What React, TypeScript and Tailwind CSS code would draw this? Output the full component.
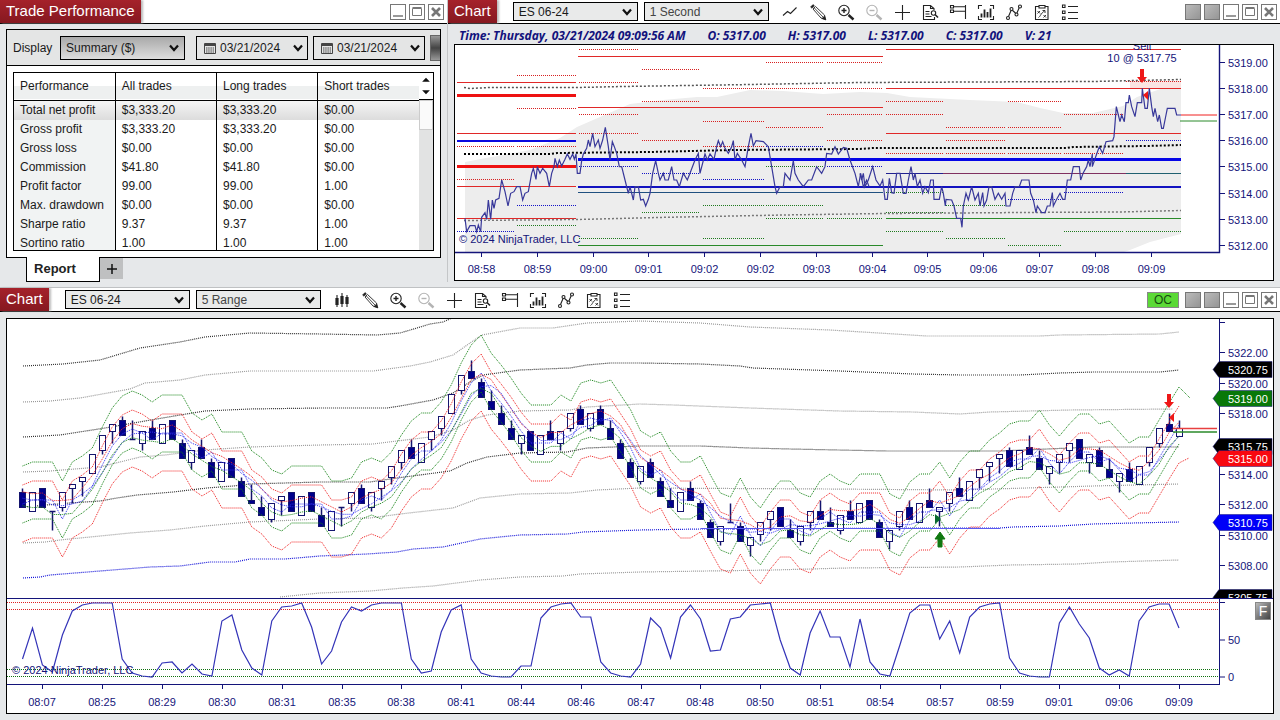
import React, { useId, useState } from 'react'

const SANS = "font-['Liberation_Sans',Arial,sans-serif]"

/* ---------- Toolbar icons ---------- */

type IconProps = { children: React.ReactNode; className?: string }

const Glyph: React.FC<IconProps> = ({ children, className = 'text-[#222]' }) => (
  <svg viewBox="0 0 18 18" className={`h-[18px] w-[18px] ${className}`} fill="none" stroke="currentColor" strokeWidth="1.1">
    {children}
  </svg>
)

const LineStyleIcon = () => (
  <Glyph>
    <path d="M2 12.500 L6.500 8.500 L9.500 10.500 L15.500 4.500" />
  </Glyph>
)

const CandleStyleIcon = () => (
  <Glyph>
    <path d="M4 4v12M9 2v14M14 4v12" />
    <path d="M4 7v7M9 5v8M14 6v7" strokeWidth="3.2" />
  </Glyph>
)

const PencilIcon = () => (
  <Glyph>
    <path d="M4 6 L6.500 3.500 L15.500 12 L16.500 16.500 L12 15 Z" strokeWidth=".9" />
    <path d="M5.200 4.800 L14 14" strokeWidth=".8" />
    <path d="M1.500 4 L4 1.500 L5.500 2.800 L3 5.300Z M15.500 13l1.500 4-4.200-1.400z" fill="currentColor" strokeWidth=".5" />
  </Glyph>
)

const ZoomInIcon = () => (
  <Glyph>
    <circle cx="7" cy="7.500" r="5.200" />
    <path d="M7 5v5M4.500 7.500h5" strokeWidth="1.400" />
    <path d="M11.500 12 L16.500 16.500" strokeWidth="2.400" />
  </Glyph>
)

const ZoomOutIcon = () => (
  <Glyph className="text-[#b4b4b4]">
    <circle cx="7" cy="7.500" r="5.200" />
    <path d="M4.500 7.500h5" strokeWidth="1.400" />
    <path d="M11.500 12 L16.500 16.500" strokeWidth="2.400" />
  </Glyph>
)

const CrosshairIcon = () => (
  <Glyph>
    <path d="M9.500 2v15M2 9.500h15" />
  </Glyph>
)

const DataBoxIcon = () => (
  <Glyph>
    <path d="M13 7 V5.500 L9.500 2.500 H2.500 V16.500 H13.500 V14 M9.500 2.500 V5.500 H13" />
    <path d="M4.500 8.500h4M4.500 11h4M4.500 13.500h6" />
    <circle cx="12.500" cy="10" r="2.200" />
    <path d="M14 11.500l3 3" strokeWidth="1.600" />
  </Glyph>
)

const TraderIcon = () => (
  <Glyph>
    <path d="M1.500 2.500h3v2.500h-3zM1.500 7h3v2.500h-3z" />
    <path d="M4.500 3.800h12M16.500 2v14M4.500 8.300h12" />
  </Glyph>
)

const IndicatorIcon = () => (
  <Glyph>
    <path d="M5 2.500H1.500V6M13 2.500h3.500V6M5 16.500H1.500V13M13 16.500h3.500V13" />
    <path d="M4.500 10.500v4M7.500 6.500v8M10.500 9v5.500M13.500 5.500v9" strokeWidth="1.800" />
  </Glyph>
)

const DrawingIcon = () => (
  <Glyph>
    <path d="M3.500 13.500 L6.500 6.500 L11.500 11 L14.500 4" />
    <circle cx="3" cy="15" r="1.500" fill="#fff" />
    <circle cx="6.500" cy="6" r="1.500" fill="#fff" />
    <circle cx="11.500" cy="11.500" r="1.500" fill="#fff" />
    <circle cx="15" cy="3.500" r="1.500" fill="#fff" />
  </Glyph>
)

const StrategyIcon = () => (
  <Glyph>
    <path d="M6 3.500H2.500v13h12.500v-13H12" />
    <path d="M6 2.500h6v2.500H6z" />
    <path d="M4.500 8l2.500 2.500M7 8l-2.500 2.500M10.500 12l2.500 2.500M13 12l-2.500 2.500M5.500 14.500c2-1 2-4 6-6.500M9.500 7.500h2.500V10" strokeWidth=".9" />
  </Glyph>
)

const PropertiesIcon = () => (
  <Glyph>
    <path d="M1.500 2h2.500v2.500h-2.500zM1.500 8h2.500v2.500h-2.500zM1.500 14h2.500v2.500h-2.500zM7 3.500h10M7 9.500h10M7 15.500h10" />
  </Glyph>
)

const tools = [
  { label: 'Zoom in', icon: ZoomInIcon },
  { label: 'Zoom out', icon: ZoomOutIcon },
  { label: 'Crosshair', icon: CrosshairIcon },
  { label: 'Data box', icon: DataBoxIcon },
  { label: 'Chart trader', icon: TraderIcon },
  { label: 'Indicators', icon: IndicatorIcon },
  { label: 'Drawing objects', icon: DrawingIcon },
  { label: 'Strategies', icon: StrategyIcon },
  { label: 'Properties', icon: PropertiesIcon },
]

/* ---------- Shared window chrome ---------- */

const Title: React.FC<{ children: string }> = ({ children }) => (
  <h2 className="flex h-full items-center bg-linear-to-b from-[#a5222b] to-[#861820] px-1.5 text-[15px] text-white shadow-[2px_0_2px_#bbb]">
    {children}
  </h2>
)

const Chevron: React.FC<{ className?: string }> = ({ className = '' }) => (
  <svg viewBox="0 0 10 8" className={`pointer-events-none h-2 w-2.5 ${className}`} fill="none" stroke="#111" strokeWidth="2.200">
    <path d="M1 1.500 L5 6 L9 1.500" />
  </svg>
)

type DropDownProps = { label: string; options: string[]; className?: string; id?: string }

const DropDown: React.FC<DropDownProps> = ({ label, options, className = '', id }) => (
  <div className="relative flex shrink-0 items-center">
    <select
      id={id}
      aria-label={label}
      className={`w-[125px] appearance-none border border-black pl-[5px] text-xs outline-none ${className}`}
    >
      {options.map((o) => (
        <option key={o}>{o}</option>
      ))}
    </select>
    <Chevron className="absolute right-1.5" />
  </div>
)

const WindowButtons: React.FC<{ linked?: boolean }> = ({ linked }) => {
  const box = 'flex h-4 w-4 items-center justify-center border border-[#777] text-[#777]'
  return (
    <div className="ml-auto flex items-center gap-[3px] pr-[3px]">
      {linked && (
        <>
          <button aria-label="Instrument link" className={`${box} bg-linear-to-br from-[#bbb] to-[#959595]`} />
          <button aria-label="Interval link" className={`${box} bg-linear-to-br from-[#bbb] to-[#959595]`} />
        </>
      )}
      <button aria-label="Minimize" className={`${box} bg-white`}>
        <svg viewBox="0 0 14 14" className="h-3.5 w-3.5"><path d="M2 11h10" stroke="currentColor" strokeWidth="1.500" /></svg>
      </button>
      <button aria-label="Maximize" className={`${box} bg-white`}>
        <svg viewBox="0 0 14 14" className="h-3.5 w-3.5" fill="none" stroke="currentColor"><path d="M2.500 3.500h9v7h-9zM2.500 2.500h9" /></svg>
      </button>
      <button aria-label="Close" className={`${box} bg-white`}>
        <svg viewBox="0 0 14 14" className="h-3.5 w-3.5"><path d="M3 3l8 8M11 3l-8 8" stroke="currentColor" strokeWidth="2.600" /></svg>
      </button>
    </div>
  )
}

type ChartHeaderProps = { interval: string; style: React.FC; oc?: boolean }

const ChartHeader: React.FC<ChartHeaderProps> = ({ interval, style: StyleIcon, oc }) => (
  <header className="flex h-6 items-center border-b border-black bg-white">
    <Title>Chart</Title>
    <div className="ml-4 flex gap-[6px]">
      <DropDown label="Instrument" options={['ES 06-24']} className="h-[19px] bg-[#e9eaea]" />
      <DropDown label="Interval" options={[interval]} className="h-[19px] bg-[#e9eaea] text-[#444]" />
    </div>
    <div className="ml-3 flex gap-2.5">
      <button aria-label="Chart style"><StyleIcon /></button>
      <button aria-label="Draw"><PencilIcon /></button>
      {tools.map(({ label, icon: Icon }) => (
        <button key={label} aria-label={label}><Icon /></button>
      ))}
    </div>
    {oc && (
      <button className="-mr-0.5 ml-auto h-4 w-8 border border-[#888] bg-[#5bd936] text-xs leading-3 text-[#154a10]">OC</button>
    )}
    <div className={oc ? 'ml-2' : 'ml-auto'}><WindowButtons linked /></div>
  </header>
)

/* ---------- Trade performance ---------- */

const columns = ['Performance', 'All trades', 'Long trades', 'Short trades']

const rows = [
  ['Total net profit', '$3,333.20', '$3,333.20', '$0.00'],
  ['Gross profit', '$3,333.20', '$3,333.20', '$0.00'],
  ['Gross loss', '$0.00', '$0.00', '$0.00'],
  ['Commission', '$41.80', '$41.80', '$0.00'],
  ['Profit factor', '99.00', '99.00', '1.00'],
  ['Max. drawdown', '$0.00', '$0.00', '$0.00'],
  ['Sharpe ratio', '9.37', '9.37', '1.00'],
  ['Sortino ratio', '1.00', '1.00', '1.00'],
]

const DateField: React.FC<{ label: string }> = ({ label }) => {
  const [value, setValue] = useState('03/21/2024')
  return (
    <div className="flex h-6 w-[112px] items-center border border-black pl-[7px] pr-1">
      <svg viewBox="0 0 12 12" className="h-3 w-3 shrink-0" fill="none" stroke="#444">
        <path d="M.5 1.500h11v10H.5z M.5 3.500h11" />
        <path d="M1 2.500h10" strokeWidth="2" />
        <path d="M2 6h8M2 8h8M2 10h8" strokeDasharray="1.500 .7" />
      </svg>
      <input
        aria-label={label}
        value={value}
        onChange={(e) => setValue(e.target.value)}
        className="ml-1 w-0 flex-1 bg-transparent text-xs outline-none"
      />
      <Chevron className="shrink-0" />
    </div>
  )
}

const TradePerformance: React.FC = () => {
  const displayId = useId()
  return (
    <section className="flex w-[448px] shrink-0 flex-col border-r border-[#c4c6c8]">
      <header className="flex h-6 items-center border-b border-black bg-white">
        <Title>Trade Performance</Title>
        <WindowButtons />
      </header>

      <div className="mx-1.5 mt-[5px] border border-black bg-white">
        <div className="flex h-9 items-center overflow-hidden border-b border-black bg-[#e4e5e5] pl-1.5 text-xs">
          <label htmlFor={displayId} className="w-[47px] shrink-0">Display</label>
          <DropDown id={displayId} label="Display" options={['Summary ($)']} className="h-6 bg-linear-to-b from-[#a9a9a9] to-[#dedede]" />
          <div className="ml-[11px] flex shrink-0 gap-[5px]">
            <DateField label="Start date" />
            <DateField label="End date" />
          </div>
          <button aria-label="Generate" className="ml-[5px] h-[26px] w-6 shrink-0 border border-[#666] bg-linear-to-b from-[#999] via-[#444] to-[#999]" />
        </div>

        <div className="m-1.5 flex max-h-[179px] overflow-hidden border border-black">
          <table className="h-fit w-0 flex-1 table-fixed border-collapse text-left text-xs">
            <thead>
              <tr className="h-[27px] border-b border-black bg-linear-to-b from-white from-50% to-[#eef0f0] to-50%">
                {columns.map((c) => (
                  <th key={c} className="w-1/4 border-r border-black pl-[6px] font-normal last:border-r-0">{c}</th>
                ))}
              </tr>
            </thead>
            <tbody>
              {rows.map((row, i) => (
                <tr key={row[0]} className={`h-[19px] ${i === 0 ? 'bg-linear-to-b from-[#f6f6f6] to-[#dcdcdc]' : ''}`}>
                  {row.map((cell, j) => (
                    <td
                      key={j}
                      className={`whitespace-nowrap border-r border-black pl-[6px] leading-[19px] last:border-r-0 ${j === 0 && i > 0 ? 'bg-[#f1f3f3]' : ''}`}
                    >
                      {cell}
                    </td>
                  ))}
                </tr>
              ))}
            </tbody>
          </table>
          <div className="flex w-3.5 flex-col bg-[#e2e3e3]">
            <svg viewBox="0 0 14 27" className="h-[27px] w-3.5 border-b border-black bg-white">
              <path d="M3 9 L7 5 L11 9Z M3 18 L7 22 L11 18Z" fill="#111" />
            </svg>
            <button aria-label="Scroll" className="h-[30px] border border-[#ccc] bg-[#fafafa]" />
          </div>
        </div>
      </div>

      <div className="-mt-px flex pl-[26px]">
        <button className="h-[25px] w-[74px] border border-t-0 border-black bg-white pr-4 text-[13px] font-bold text-[#222]">Report</button>
        <button aria-label="Add tab" className="mt-px flex h-[21px] w-[23px] items-center justify-center bg-[#bfc0c1]">
          <svg viewBox="0 0 12 12" className="h-3 w-3"><path d="M6 1v10M1 6h10" stroke="#111" strokeWidth="1.500" /></svg>
        </button>
      </div>
    </section>
  )
}

/* ---------- One second chart ---------- */

const RED = '#e02828'
const BLUE = '#1414c8'
const GREEN = '#2a8a2a'
const NAVY = '#14147a'

// [x1, x2, y, colour, width]
const levels: [number, number, number, string, number][] = [
  [457, 576, 82, RED, 1], [457, 576, 95, '#ee1111', 3], [457, 576, 133, RED, 1], [457, 576, 141, '#0a0ae0', 2],
  [457, 576, 166, '#ee1111', 3], [457, 576, 186, RED, 1], [457, 576, 218, RED, 1],
  [578, 883, 56, RED, 1], [578, 883, 107, RED, 1], [578, 1181, 159, '#0505e6', 3], [578, 1181, 187, '#1212c0', 2],
  [578, 883, 192, '#205080', 1], [578, 883, 245, GREEN, 1],
  [886, 1181, 49, RED, 1], [886, 1181, 88, RED, 1], [886, 1181, 133, RED, 1],
  [886, 943, 173, '#202090', 1], [943, 1126, 173, '#803060', 1], [1126, 1181, 173, '#206070', 1], [886, 1181, 218, GREEN, 1],
]

// every session slice carries its own set of dotted levels
const dotted: { x: [number, number]; red: number[]; blue: number[]; green: number[] }[] = [
  { x: [457, 514], red: [146, 179], blue: [231], green: [] },
  { x: [517, 576], red: [75, 108, 146], blue: [205], green: [225] },
  { x: [579, 638], red: [49, 82, 114, 133], blue: [166], green: [238] },
  { x: [642, 699], red: [69, 101, 140], blue: [173], green: [212] },
  { x: [703, 764], red: [88, 121, 146], blue: [179], green: [205, 238] },
  { x: [766, 824], red: [62, 88, 127], blue: [146], green: [166, 205, 218] },
  { x: [827, 883], red: [62, 88, 114, 140], blue: [166], green: [218] },
  { x: [886, 943], red: [101, 114, 153], blue: [], green: [192, 212, 231] },
  { x: [946, 1005], red: [127, 140, 153], blue: [], green: [205, 238] },
  { x: [1008, 1061], red: [101, 127, 153], blue: [199], green: [245] },
  { x: [1064, 1124], red: [114, 153], blue: [192], green: [231] },
  { x: [1126, 1181], red: [81], blue: [140], green: [231] },
]

// tick path, in thirds of a pixel from each slice's origin
const priceSlices = [
  {
    at: 'translate(450 130) scale(.33333)',
    d: '45,265 50,305 60,287 75,287 80,305 85,285 92,305 95,262 105,248 110,268 115,210 122,268 127,210 132,235 137,210 147,205 155,150 165,185 174,228 182,190 192,185 200,170 210,170 218,210 225,190 235,185 245,130 250,115 258,148 262,110 270,130 278,115 290,130 298,170 305,130 312,110 315,85 322,110 328,90 335,108 345,88 352,72 360,88 368,72 373,88 378,72 382,130 390,130 395,92 400,72 410,55 415,30 420,50 428,10 435,50 445,30 450,55 458,30 466,-8 475,50 480,90 487,35 493,50 500,70 508,110 515,110 525,150 535,190 540,170 550,210 555,170 565,170 572,210 580,208 587,228 595,208 600,190 608,130 617,92 625,130 630,150 640,130 645,150 655,150 665,110 672,150 680,150 688,170 700,130 712,150 720,130 735,90 745,70 750,130 765,72 772,90 780,72 792,88 800,50 805,32 812,50 818,35 825,55 835,70 845,50 850,32 855,90 862,70 875,90 885,110 895,50 903,10 910,48 918,32 940,35 955,50 965,110 975,170 980,190 990,170 1000,170 1005,130 1020,150 1030,92 1035,130 1045,150 1060,170 1075,150 1085,150 1100,110 1115,130 1125,110 1130,70 1145,72 1155,50 1165,72 1180,52 1190,55 1200,90 1215,130 1225,170 1232,130 1240,170 1250,150 1257,170',
  },
  {
    at: 'translate(860 130) scale(.33333)',
    d: '0,130 5,150 10,130 15,170 25,150 38,110 48,150 60,168 68,150 75,208 82,208 88,145 95,188 102,190 110,130 120,130 130,190 138,190 145,150 153,110 160,150 165,130 172,170 180,150 188,190 195,170 205,188 212,150 220,150 222,208 238,208 245,170 250,190 256,228 258,208 275,210 282,228 290,265 302,265 306,292 310,228 318,190 325,210 335,170 345,210 355,190 360,228 368,188 372,228 380,210 387,170 395,170 405,208 415,190 425,208 435,190 438,228 450,228 458,190 465,170 478,170 485,150 507,150 512,190 520,210 528,248 532,228 545,248 555,248 562,228 570,228 577,188 580,228 590,208 600,190 608,208 615,208 622,150 632,150 640,110 658,110 662,150 670,128 680,110 685,90 690,110 697,72 697,110 710,72 718,50 728,70 738,35 758,32 762,20 769,-70 775,-45 780,-25 785,-45 793,-25 798,-82 805,-82 808,-105 815,-70 825,-40 832,-82 845,-82 847,-125 855,-65 862,-65 868,-125 875,-70 880,-40 885,-65 893,-25 898,-45 905,-5 910,-5 918,-45 922,-65 945,-65 950,-45 963,-45',
  },
]

const quotes = ['O: 5317.00', 'H: 5317.00', 'L: 5317.00', 'C: 5317.00', 'V: 21']
const secondTimes = ['08:58', '08:59', '09:00', '09:01', '09:02', '09:02', '09:03', '09:04', '09:05', '09:06', '09:07', '09:08', '09:09']

const DownArrow: React.FC<{ x: number; y: number }> = ({ x, y }) => (
  <path d={`M${x - 2} ${y}h4v8h3l-5 6-5-6h3z`} fill="#ee1818" />
)

const SecondChart: React.FC = () => (
  <section className="flex min-w-0 flex-1 flex-col">
    <ChartHeader interval="1 Second" style={LineStyleIcon} />
    <p className="flex h-5 items-center gap-[22px] whitespace-nowrap pl-[11px] pt-1 font-['Open_Sans',sans-serif] text-xs font-bold italic text-[#12127c]">
      <span>Time: Thursday, 03/21/2024 09:09:56 AM</span>
      {quotes.map((q) => (
        <span key={q}>{q}</span>
      ))}
    </p>
    <div className="mx-1.5 border border-black bg-white">
      <svg viewBox="455 45 818 235" className="h-auto w-full" fontSize="11" fill={NAVY}>
        <path
          fill="#ededed"
          d="M465 252V162L486 158L530 150L560 138L577 127L600 117L630 104L663 100L697 97L717 97L750 90L783 91L823 94L860 92L887 93L910 97L970 100L1017 102L1040 108L1063 113L1093 113L1123 106L1137 97L1181 82V234L1150 242L1130 250L1124 252Z"
        />
        <path d="M1130 81H1181V88H1130Z" fill="#fbe4e2" />
        <g fill="none" shapeRendering="crispEdges">
          {dotted.flatMap(({ x, red, blue, green }) =>
            [
              ...red.map((y) => [y, '#d82020'] as const),
              ...blue.map((y) => [y, BLUE] as const),
              ...green.map((y) => [y, '#1e7a1e'] as const),
            ].map(([y, c]) => (
              <path key={`${x[0]}-${y}`} d={`M${x[0]} ${y + 0.5}H${x[1]}`} stroke={c} strokeDasharray="1 1" />
            )),
          )}
          {levels.map(([x1, x2, y, c, w]) => (
            <path key={`${x1}-${y}`} d={`M${x1} ${w === 2 ? y : y + 0.5}H${x2}`} stroke={c} strokeWidth={w} />
          ))}
        </g>
        <g fill="none" strokeDasharray="2 2">
          <path d="M464 87.500L470 88.500L490 87.500H577L623 86.500L750 84.500L860 82.500L1093 81.500L1181 79.500" stroke="#555" strokeWidth="1.500" />
          <path d="M464 154H550L557 153L650 152L733 150L860 149L873 148H1067L1073 147L1147 146L1181 145" stroke="#000" strokeWidth="2" />
          <path d="M464 220.500L577 219.500L657 217.500L783 215L885 213.500L1023 212.500L1120 212L1181 210.500" stroke="#777" strokeWidth="1.500" />
        </g>
        {priceSlices.map((s) => (
          <polyline key={s.at} points={s.d} transform={s.at} fill="none" stroke="#38389a" strokeWidth="3.600" />
        ))}
        <path d="M1181 115H1217" stroke="#f02020" />
        <path d="M1180 121H1217" stroke={GREEN} />
        <DownArrow x={1142} y={69} />
        <path d="M1148 91V100L1143 95Z" fill="#ee1818" />
        <text x="1142" y="50" textAnchor="middle">Sell</text>
        <text x="1142" y="62" textAnchor="middle">10 @ 5317.75</text>
        <text x="459" y="243">© 2024 NinjaTrader, LLC</text>

        <path d="M455 252.500H1219.500V45" fill="none" stroke={NAVY} strokeWidth="1.400" />
        {[5319, 5318, 5317, 5316, 5315, 5314, 5313, 5312].map((p, i) => {
          const y = 62.5 + Math.round(i * 26.1)
          return (
            <g key={p}>
              <path d={`M1220 ${y}H1225`} stroke={NAVY} />
              <text x="1228" y={y + 4}>{p}.00</text>
            </g>
          )
        })}
        {secondTimes.map((t, i) => {
          const x = 481.5 + Math.round(i * 55.8)
          return (
            <g key={i}>
              <path d={`M${x} 253V257`} stroke={NAVY} />
              <text x={x} y="273" textAnchor="middle">{t}</text>
            </g>
          )
        })}
      </svg>
    </div>
  </section>
)

/* ---------- Five range chart ---------- */

// 'u' bars close on the high, 'd' bars close on the low; low and open in ticks above 5308
const bars =
  'd15,19 u14,14 d15,20 u9,14 u14,15 u16,20 u18,22 u24,24 u29,30 u32,35 d34,38 d33,33 u30,32 d33,36 u32,32 d33,38 d28,32 u25,27 d28,31 d23,27 u22,22 d23,28 d18,22 d16,17 d13,15 u11,12 u13,17 d14,19 u13,13 d14,19 d10,13 ' +
  'u9,9 u10,15 u14,16 d16,20 u14,15 u17,20 u21,23 u25,27 d28,31 u27,27 u30,33 u34,36 u40,40 u45,46 d49,51 d44,48 d41,43 d37,40 d33,36 u29,32 d30,35 u29,29 d33,35 u30,32 u35,36 d37,41 u35,36 d37,41 d33,36 d28,32 d23,27 u21,22 ' +
  'd23,27 d18,22 d15,17 u14,14 d17,20 d12,16 d7,11 u5,6 d11,11 d6,10 u2,5 u6,8 u9,12 d10,15 d7,9 u5,6 u9,11 d12,14 d10,11 u8,9 d12,14 u11,11 d12,17 d7,11 u4,6 u9,10 d12,15 u11,11 d15,17 u10,14 u14,16 d18,20 ' +
  'u17,17 u20,23 u22,26 u24,28 d26,30 u25,25 d29,31 d25,28 u21,24 u24,27 u27,30 d28,33 u24,27 d26,30 d23,25 u19,22 d22,25 u21,21 u26,27 u31,32 d35,37 u34,34'

const candles = bars.split(' ').map((s) => {
  const [low, open] = s.slice(1).split(',').map(Number)
  return { up: s[0] === 'u', low, open, high: low + 5 }
})

const upperBand = [
  466, 462, 462, 462, 481, 462, 456, 448, 427, 408, 396, 391, 395, 402, 395, 395, 395, 413, 420, 414, 432, 432, 432, 451, 458, 470, 474, 466, 466, 466,
  466, 481, 481, 478, 462, 458, 462, 452, 435, 421, 413, 413, 402, 385, 363, 345, 335, 353, 365, 378, 393, 405, 405, 405, 395, 401, 383, 380, 383, 380,
  395, 410, 431, 437, 432, 451, 462, 462, 456, 475, 493, 497, 478, 497, 508, 493, 481, 481, 493, 497, 481, 474, 481, 485, 474, 474, 474, 494, 499, 482,
  474, 474, 462, 478, 462, 451, 451, 440, 433, 424, 421, 421, 410, 425, 436, 424, 414, 414, 424, 421, 432, 443, 437, 437, 420, 403, 387,
]

const oscillator = [
  659, 628, 665, 672, 635, 611, 605, 603, 603, 603, 659, 673, 676, 677, 663, 662, 673, 664, 674, 676, 621, 615, 650, 668, 675, 621, 607, 606, 603, 627,
  664, 651, 622, 607, 611, 605, 603, 603, 603, 659, 673, 671, 632, 610, 605, 659, 673, 676, 677, 677, 666, 666, 618, 607, 604, 603, 617, 617, 662, 673,
  676, 677, 664, 618, 628, 658, 617, 605, 619, 651, 650, 619, 617, 605, 604, 603, 640, 668, 675, 633, 611, 637, 637, 667, 619, 662, 674, 676, 645, 613,
  605, 605, 639, 621, 653, 617, 607, 604, 603, 658, 673, 676, 677, 677, 623, 607, 624, 638, 668, 675, 670, 676, 621, 607, 604, 604, 628,
]

const sessionBands = [
  { c: '#333', d: '23,366 63,364 100,360 140,348 180,342 205,337 250,333 320,334 377,335 400,333 417,328 430,324 443,322 452,318' },
  { c: '#999', d: '23,402 50,401 80,398 130,389 145,383 180,380 205,375 250,371 373,371 410,366 430,362 453,355 470,343 482,335 520,328 553,328 587,323 640,321 700,323 750,327 830,330 927,336 1040,336 1060,335 1160,334 1179,332' },
  { c: '#333', d: '23,437 60,435 105,428 145,421 180,415 205,411 250,409 320,408 387,408 400,406 433,400 453,393 470,382 483,375 520,370 570,368 587,365 610,363 640,363 700,364 740,366 753,368 840,371 913,374 960,375 1020,375 1060,373 1093,372 1160,372 1179,370' },
  { c: '#999', d: '23,472 50,471 100,467 140,457 165,455 205,450 250,447 320,445 373,444 397,441 430,437 453,430 470,420 487,415 520,411 570,410 587,407 640,404 673,405 750,408 840,411 913,412 960,414 990,412 1070,410 1173,409' },
  { c: '#333', d: '23,507 70,503 100,501 117,498 137,495 173,492 207,488 233,486 250,484 320,482 370,482 397,478 450,471 467,463 487,457 520,453 567,452 587,448 640,446 700,446 750,448 790,449 887,451 1000,451 1047,449 1093,447 1179,447' },
  { c: '#999', d: '23,543 45,542 60,540 130,533 170,530 205,526 250,522 320,519 370,518 400,514 453,508 480,498 520,494 570,493 597,490 640,488 827,489 960,490 1060,487 1093,486 1179,484' },
  { c: '#1414d8', d: '23,578 40,577 50,575 100,571 150,567 180,566 210,562 235,562 250,559 285,559 320,556 367,554 397,552 413,549 443,547 480,539 520,535 567,534 583,532 640,530 700,529 960,528 1000,528 1013,527 1060,526 1093,524 1133,523 1179,522' },
  { c: '#999', d: '280,597 320,593 370,591 403,588 433,586 480,580 520,577 563,576 580,574 640,572 773,570 847,568 960,567 1010,565 1077,564 1110,562 1179,560' },
]

const rangeTimes = [
  '08:07', '08:25', '08:29', '08:30', '08:31', '08:35', '08:38', '08:41', '08:44', '08:46',
  '08:47', '08:48', '08:50', '08:51', '08:54', '08:57', '08:59', '09:01', '09:06', '09:09',
]

const scale: [string, number][] = [
  ['5322.00', 352], ['5320.00', 383], ['5318.00', 413], ['5314.00', 474], ['5312.00', 504], ['5310.00', 535], ['5308.00', 565],
]

const tags: [string, number, string][] = [
  ['5320.75', 369, '#000'], ['5319.00', 398, '#087808'], ['5315.75', 446, '#000'], ['5315.00', 458, '#f80810'], ['5310.75', 522, '#0000f8'], ['5305.75', 597, '#000'],
]

const barX = (i: number) => 22.5 + i * 9.97
const tickY = (t: number) => 564.5 - t * 3.786
const crisp = (v: number) => Math.floor(v) + 0.5
const series = (ys: number[], shift = 0) => ys.map((y, i) => `${barX(i).toFixed(1)},${(y + shift).toFixed(1)}`).join(' ')

const rolling = (pick: (c: (typeof candles)[number]) => number, n: number) =>
  candles.map((_, i) => {
    const part = candles.slice(Math.max(0, i - n + 1), i + 1)
    return part.reduce((sum, c) => sum + tickY(pick(c)), 0) / part.length
  })

const highs = rolling((c) => c.high, 3)
const lows = rolling((c) => c.low, 3)
const mids = rolling((c) => (c.high + c.low) / 2, 4)

const RangeChart: React.FC = () => (
  <section className="border-t border-[#bfc1c3]">
    <ChartHeader interval="5 Range" style={CandleStyleIcon} oc />
    <div className="relative mx-1.5 mt-1.5 border border-black bg-white">
      <svg viewBox="7 319 1266 394" className="h-auto w-full" fontSize="11" fill={NAVY}>
        <defs>
          <clipPath id="price-pane"><path d="M7 319H1273V598H7Z" /></clipPath>
        </defs>

        <g clipPath="url(#price-pane)" fill="none">
          <g strokeDasharray="1 1">
            {sessionBands.map((b) => (
              <polyline key={b.d} points={b.d} stroke={b.c} strokeWidth="1.200" />
            ))}
          </g>
          {candles.map((c, i) => {
            const last = i === candles.length - 1
            const x = crisp(barX(i))
            const close = c.up ? c.high : c.low
            const high = last ? 420.5 : crisp(tickY(c.high))
            const low = last ? 436.5 : crisp(tickY(c.low))
            const top = last ? 428.5 : crisp(tickY(Math.max(c.open, close)))
            const bottom = last ? 436.5 : crisp(tickY(Math.min(c.open, close)))
            return (
              <g key={i} stroke="#14146e">
                <path d={`M${x} ${high}V${top}M${x} ${bottom}V${low}`} strokeWidth="1.500" />
                {top === bottom ? (
                  <path d={`M${x - 3} ${top}h6`} strokeWidth="1.500" />
                ) : (
                  <rect x={x - 3} y={top} width="6" height={bottom - top} fill={c.up ? '#fff' : '#00008b'} />
                )}
              </g>
            )
          })}
          <g strokeDasharray="1 1">
            <polyline points={`${series(upperBand)} 1190,398`} stroke="#128212" />
            <polyline points={series(upperBand, 19)} stroke="#f02020" />
            <polyline points={series(upperBand, 38)} stroke="#3030f0" />
            <polyline points={series(upperBand, 57)} stroke="#128212" />
            <polyline points={`${series(upperBand, 76)} 1189,458`} stroke="#f02020" />
            <polyline points={series(highs, 3)} stroke="#f02020" />
            <polyline points={series(mids)} stroke="#3030f0" />
            <polyline points={series(lows, -2)} stroke="#128212" />
          </g>
          <path d="M701 528.500H1000" stroke="#5a5af0" />
          <path d="M1173 428.500H1217" stroke="#e84040" strokeWidth="1.400" />
          <path d="M1173 432H1217" stroke={GREEN} strokeWidth="1.400" />
        </g>
        <DownArrow x={1169} y={394} />
        <path d="M1174 413V422L1169 417.500Z" fill="#ee1818" />
        <path d="M935 514V524L941 519Z" fill="#0a6a30" />
        <path d="M938 547h4v-8h3l-5-7-5 7h3z" fill="#107810" stroke="#107810" />

        <g fill="none" shapeRendering="crispEdges">
          <path d="M7 602.500H1218M7 609.500H1218" stroke="#e02020" strokeDasharray="1 1" />
          <path d="M7 669.500H1218M7 676.500H1218" stroke="#107010" strokeDasharray="1 1" />
          <path d="M7 598.500H1273" stroke={NAVY} />
          <path d="M7 684.500H1219.500V319" stroke={NAVY} />
        </g>
        <polyline points={series(oscillator)} fill="none" stroke="#3434b8" strokeWidth="1.200" />
        <text x="12" y="674">© 2024 NinjaTrader, LLC</text>

        <path d="M1220 322.500H1225M1220 602.500H1225M1220 640H1225M1220 677H1225" stroke={NAVY} />
        <text x="1228" y="644">50</text>
        <text x="1228" y="681">0</text>
        {scale.map(([label, y]) => (
          <g key={label}>
            <path d={`M1220 ${y + 0.5}H1225`} stroke={NAVY} />
            <text x="1228" y={y + 5}>{label}</text>
          </g>
        ))}
        <g clipPath="url(#price-pane)">
          {tags.map(([label, y, c]) => (
            <g key={label}>
              <path d={`M1213 ${y + 0.5}L1219 ${y - 7.5}H1272V${y + 8.5}H1219Z`} fill={c} stroke={NAVY} strokeWidth=".5" />
              <text x="1228" y={y + 5} fill="#fff">{label}</text>
            </g>
          ))}
        </g>
        {rangeTimes.map((t, i) => {
          const x = Math.round(barX(2 + i * 6))
          return (
            <g key={i}>
              <path d={`M${x}.5 685V689`} stroke={NAVY} />
              <text x={x} y="706" textAnchor="middle">{t}</text>
            </g>
          )
        })}
      </svg>
      <button className="absolute right-0.5 top-[283px] h-[18px] w-4 border border-[#888] bg-linear-to-br from-[#bbb] to-[#444] text-sm leading-4 text-white">
        F
      </button>
    </div>
  </section>
)

export default function App() {
  return (
    <main className={`min-h-screen overflow-hidden bg-[#e6e8ea] text-[#1a1a1a] ${SANS}`}>
      <div className="flex pb-[5px]">
        <TradePerformance />
        <SecondChart />
      </div>
      <RangeChart />
    </main>
  )
}
